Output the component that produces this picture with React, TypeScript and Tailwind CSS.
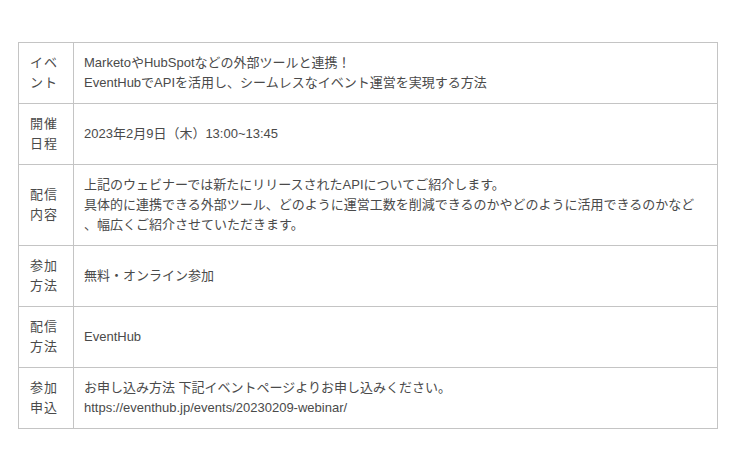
import React from "react";

const rows: { label: string; lines: string[] }[] = [
  {
    label: "イベント",
    lines: [
      "MarketoやHubSpotなどの外部ツールと連携！",
      "EventHubでAPIを活用し、シームレスなイベント運営を実現する方法",
    ],
  },
  { label: "開催日程", lines: ["2023年2月9日（木）13:00~13:45"] },
  {
    label: "配信内容",
    lines: [
      "上記のウェビナーでは新たにリリースされたAPIについてご紹介します。",
      "具体的に連携できる外部ツール、どのように運営工数を削減できるのかやどのように活用できるのかなど",
      "、幅広くご紹介させていただきます。",
    ],
  },
  { label: "参加方法", lines: ["無料・オンライン参加"] },
  { label: "配信方法", lines: ["EventHub"] },
  {
    label: "参加申込",
    lines: [
      "お申し込み方法 下記イベントページよりお申し込みください。",
      "https://eventhub.jp/events/20230209-webinar/",
    ],
  },
];

export default function App() {
  return (
    <div
      className="w-[740px] h-[469px] bg-white pt-[42px] pl-[18px] text-[#4a4a4a] text-[13px] leading-[20px]"
      style={{ fontFamily: '"Liberation Sans", Arial, "Noto Sans CJK JP", sans-serif' }}
    >
      <table className="w-[700px] border-collapse">
        <tbody>
          {rows.map((row) => (
            <tr key={row.label}>
              {/* label column */}
              <td className="w-[55px] border border-[#c4c4c4] pl-[11px] pr-[8px] py-[10px] align-middle">
                <div className="tracking-[1px]">{row.label.slice(0, 2)}</div>
                <div className="tracking-[1px]">{row.label.slice(2)}</div>
              </td>
              <td className="border border-[#c4c4c4] pl-[10px] pr-[8px] py-[10px] align-middle">
                {row.lines.map((line) => (
                  <div key={line} className="whitespace-nowrap">
                    {line}
                  </div>
                ))}
              </td>
            </tr>
          ))}
        </tbody>
      </table>
    </div>
  );
}
